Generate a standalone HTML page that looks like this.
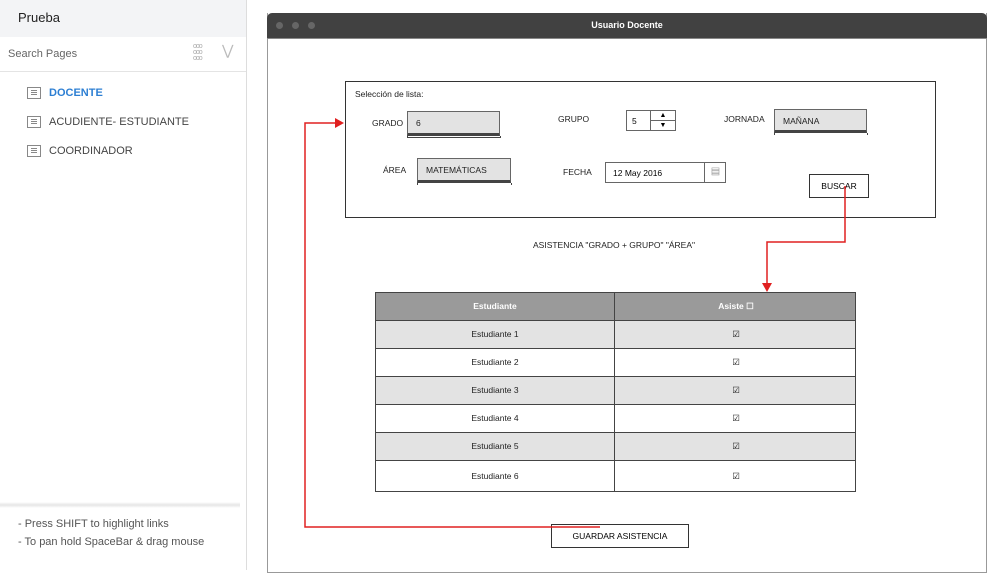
<!DOCTYPE html>
<html><head><meta charset="utf-8"><style>
*{margin:0;padding:0;box-sizing:border-box}
body{width:1000px;height:570px;overflow:hidden;background:#fff;font-family:"Liberation Sans",sans-serif;position:relative}
.abs{position:absolute}
.sb{left:0;top:0;width:247px;height:570px;background:#fff;border-right:1px solid #ddd}
.t{font-size:8.5px;color:#222;position:absolute;white-space:nowrap}
.fld{position:absolute;background:#e3e3e3;border:1px solid #666;border-bottom:3px solid #444;font-size:8.5px;padding:6px 8px;color:#222}
.row{position:absolute;left:375px;width:481px;height:28px;border:1px solid #444;border-top:none;font-size:8.5px;color:#222}
.row div{position:absolute;top:0;height:27px;line-height:27px;text-align:center}
.c1{left:0;width:239px;border-right:1px solid #444}
.c2{left:240px;width:240px}
.pi{display:inline-block;width:14px;height:12px;border:1px solid #888;vertical-align:middle;margin-right:8px;position:relative}
.pi:after{content:"";position:absolute;left:3px;top:2px;width:6px;height:6px;background:repeating-linear-gradient(#888 0 1px,transparent 1px 2px)}
</style></head><body>
<div class="abs sb">
 <div class="abs" style="left:0;top:0;width:246px;height:37px;background:#f3f4f6"></div>
 <div class="abs" style="left:18px;top:10px;font-size:13px;color:#222">Prueba</div>
 <div class="abs" style="left:8px;top:48px;font-size:11px;color:#666">Search Pages</div>
 <div class="abs" style="left:193px;top:44px;font-size:7px;color:#aaa;line-height:6px;letter-spacing:-1px">ooo<br>ooo<br>ooo</div>
 <div class="abs" style="left:222px;top:42px;font-size:14px;color:#bbb">&#8897;</div>
 <div class="abs" style="left:0;top:71px;width:246px;height:1px;background:#e4e4e4"></div>
 <div class="abs" style="left:27px;top:87px;font-size:11px;color:#2d7fd3;font-weight:bold"><span class="pi"></span>DOCENTE</div>
 <div class="abs" style="left:27px;top:116px;font-size:11px;color:#444"><span class="pi"></span>ACUDIENTE- ESTUDIANTE</div>
 <div class="abs" style="left:27px;top:145px;font-size:11px;color:#444"><span class="pi"></span>COORDINADOR</div>
 <div class="abs" style="left:0;top:502px;width:240px;height:6px;background:linear-gradient(#fff,#e6e6e6 50%,#fff)"></div>
 <div class="abs" style="left:18px;top:515px;font-size:11px;color:#555;line-height:18px">- Press SHIFT to highlight links<br>- To pan hold SpaceBar &amp; drag mouse</div>
</div>
<div class="abs" style="left:267px;top:13px;width:720px;height:560px;border:1px solid #999;border-top:none"></div>
<div class="abs" style="left:267px;top:13px;width:720px;height:26px;background:#414141;border-radius:5px 5px 0 0;border-bottom:1px solid #888"></div>
<div class="abs" style="left:276px;top:22px;width:7px;height:7px;border-radius:50%;background:#666"></div>
<div class="abs" style="left:292px;top:22px;width:7px;height:7px;border-radius:50%;background:#666"></div>
<div class="abs" style="left:308px;top:22px;width:7px;height:7px;border-radius:50%;background:#666"></div>
<div class="abs" style="left:267px;top:20px;width:720px;text-align:center;color:#fff;font-size:9px;font-weight:bold">Usuario Docente</div>

<div class="abs" style="left:345px;top:81px;width:591px;height:137px;border:1px solid #333"></div>
<div class="t" style="left:355px;top:89px">Selección de lista:</div>
<div class="t" style="left:372px;top:118px">GRADO</div>
<div class="fld" style="left:407px;top:111px;width:93px;height:25px">6</div>
<div class="abs" style="left:407px;top:136px;width:94px;height:2px;border:1px solid #444;border-top:none"></div>
<div class="t" style="left:558px;top:114px">GRUPO</div>
<div class="abs" style="left:626px;top:110px;width:50px;height:21px;border:1px solid #666;font-size:8.5px;padding:5px 5px">5</div>
<div class="abs" style="left:650px;top:110px;width:26px;height:21px;border:1px solid #666;font-size:7px;text-align:center;line-height:10px">&#9650;<br>&#9660;</div>
<div class="abs" style="left:650px;top:120px;width:26px;height:1px;background:#666"></div>
<div class="t" style="left:724px;top:114px">JORNADA</div>
<div class="fld" style="left:774px;top:109px;width:93px;height:24px">MAÑANA</div>
<div class="abs" style="left:774px;top:133px;width:94px;height:2px;border-left:1px solid #444;border-right:1px solid #444"></div>
<div class="t" style="left:383px;top:165px">ÁREA</div>
<div class="fld" style="left:417px;top:158px;width:94px;height:25px">MATEMÁTICAS</div>
<div class="abs" style="left:417px;top:183px;width:95px;height:2px;border-left:1px solid #444;border-right:1px solid #444"></div>
<div class="t" style="left:563px;top:167px">FECHA</div>
<div class="abs" style="left:605px;top:162px;width:121px;height:21px;border:1px solid #666;font-size:8.5px;padding:5px 7px">12 May 2016</div>
<div class="abs" style="left:704px;top:162px;width:22px;height:21px;border-left:1px solid #666;font-size:10px;color:#999;text-align:center;line-height:20px">&#9636;</div>
<div class="abs" style="left:809px;top:174px;width:60px;height:24px;border:1px solid #333;font-size:8.5px;text-align:center;line-height:22px">BUSCAR</div>

<div class="t" style="left:533px;top:240px">ASISTENCIA "GRADO + GRUPO" "ÁREA"</div>

<div class="abs" style="left:375px;top:292px;width:481px;height:29px;background:#9a9a9a;border:1px solid #444;color:#fff;font-size:8.5px;font-weight:bold">
 <div class="abs" style="left:0;width:239px;height:27px;line-height:27px;text-align:center;border-right:1px solid #444">Estudiante</div>
 <div class="abs" style="left:240px;width:240px;height:27px;line-height:27px;text-align:center">Asiste &#9744;</div>
</div>
<div class="row" style="top:321px;background:#e3e3e3"><div class="c1">Estudiante 1</div><div class="c2">&#9745;</div></div>
<div class="row" style="top:349px;background:#fff"><div class="c1">Estudiante 2</div><div class="c2">&#9745;</div></div>
<div class="row" style="top:377px;background:#e3e3e3"><div class="c1">Estudiante 3</div><div class="c2">&#9745;</div></div>
<div class="row" style="top:405px;background:#fff"><div class="c1">Estudiante 4</div><div class="c2">&#9745;</div></div>
<div class="row" style="top:433px;background:#e3e3e3"><div class="c1">Estudiante 5</div><div class="c2">&#9745;</div></div>
<div class="row" style="top:461px;background:#fff;height:31px"><div class="c1" style="height:30px;line-height:30px">Estudiante 6</div><div class="c2" style="height:30px;line-height:30px">&#9745;</div></div>

<div class="abs" style="left:551px;top:524px;width:138px;height:24px;border:1px solid #333;font-size:8.5px;text-align:center;line-height:22px;background:#fff">GUARDAR ASISTENCIA</div>

<svg class="abs" style="left:0;top:0" width="1000" height="570">
 <polyline points="845,186 845,242 767,242 767,284" fill="none" stroke="#e02020" stroke-width="1.5"/>
 <polygon points="762,283 772,283 767,292" fill="#e02020"/>
 <polyline points="600,527 305,527 305,123 336,123" fill="none" stroke="#e02020" stroke-width="1.5"/>
 <polygon points="335,118 335,128 344,123" fill="#e02020"/>
</svg>
</body></html>
